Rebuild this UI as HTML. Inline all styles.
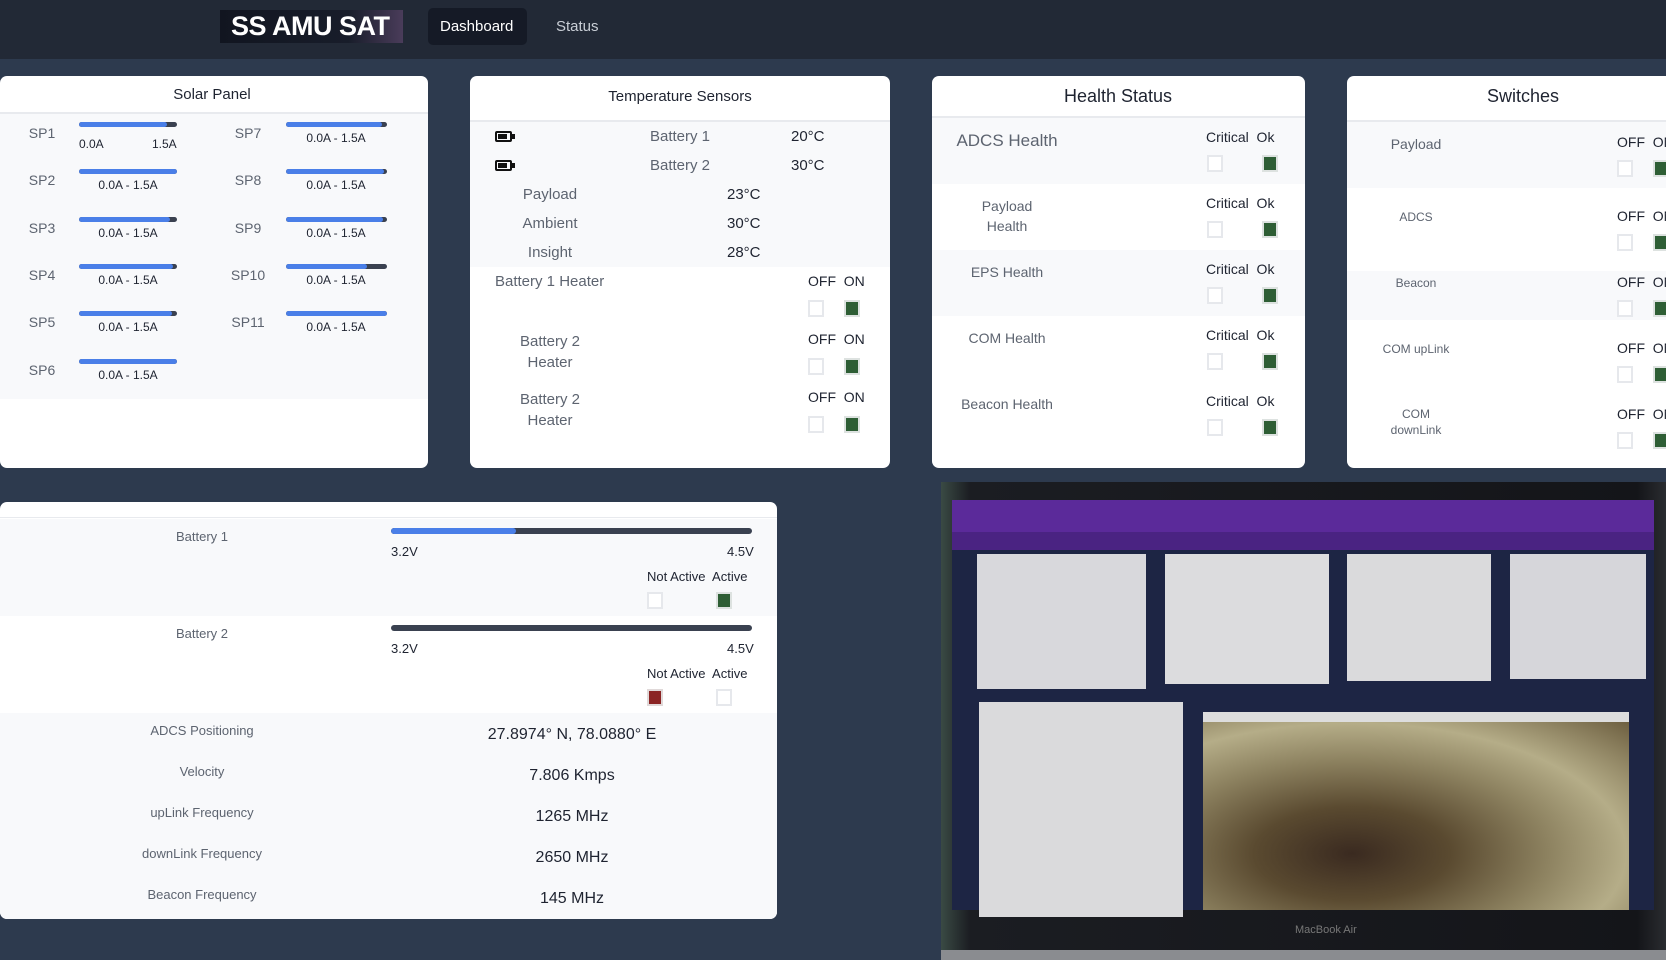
<!DOCTYPE html>
<html><head><meta charset="utf-8"><style>
*{margin:0;padding:0;box-sizing:border-box}
body{width:1666px;height:960px;overflow:hidden;background:#2d3a4e;font-family:"Liberation Sans",sans-serif;position:relative}
.a{position:absolute}
.card{position:absolute;background:#fff;border-radius:7px;overflow:hidden}
.g{position:absolute;background:#f8f9fb}
.t{position:absolute;white-space:nowrap}
.gr{color:#5d6470}
.dk{color:#1e2330}
.cb{position:absolute;width:16px;height:17px;border:2px solid #e6e8ec;background:#fff}
.on{background:#2e5e35;border-color:#dde2e0}
.red{background:#8b2424;border-color:#e0d9d9}
.bar{position:absolute;height:6px;border-radius:3px;background:#3a4150;overflow:hidden}
.bar i{position:absolute;left:0;top:0;bottom:0;background:#4a7fe8;border-radius:3px}
.c{text-align:center;transform:translateX(-50%)}
.line{position:absolute;left:0;right:0;height:2px;background:#e8eaee}
</style></head><body>
<div class="a" style="left:0;top:0;width:1666px;height:59px;background:#222936"></div>
<div class="a" style="left:220px;top:10px;width:183px;height:33px;background:linear-gradient(90deg,#111520,#181d2a 70%,#4a3c5a)"></div>
<div class="t" style="left:231px;top:11px;font-size:27px;font-weight:bold;color:#fff;letter-spacing:-0.5px">SS AMU SAT</div>
<div class="a" style="left:428px;top:8px;width:99px;height:37px;background:#151a26;border-radius:5px"></div>
<div class="t" style="left:440px;top:18px;font-size:15px;color:#fff">Dashboard</div>
<div class="t" style="left:556px;top:18px;font-size:15px;color:#c9ced6">Status</div>

<div class="card" style="left:0;top:76px;width:428px;height:392px">
<div class="t dk c" style="left:212px;top:10px;font-size:15px">Solar Panel</div>
<div class="line" style="top:36px"></div>
<div class="g" style="left:0;top:38px;width:428px;height:285px"></div>
</div>

<div class="card" style="left:470px;top:76px;width:420px;height:392px">
<div class="t dk c" style="left:210px;top:12px;font-size:15px">Temperature Sensors</div>
<div class="line" style="top:44px"></div>
<div class="g" style="left:0;top:46px;width:420px;height:145px"></div>
</div>
<div class="a" style="left:495px;top:131px;width:17px;height:11px;border:2px solid #111;border-radius:2px"><div style="margin:1px;width:9px;height:5px;background:#111"></div></div><div class="a" style="left:512px;top:134px;width:3px;height:5px;background:#111"></div>
<div class="a" style="left:495px;top:160px;width:17px;height:11px;border:2px solid #111;border-radius:2px"><div style="margin:1px;width:9px;height:5px;background:#111"></div></div><div class="a" style="left:512px;top:163px;width:3px;height:5px;background:#111"></div>
<div class="t gr c" style="left:680px;top:128px;font-size:15px">Battery 1</div><div class="t dk" style="left:791px;top:128px;font-size:15px">20°C</div>
<div class="t gr c" style="left:680px;top:157px;font-size:15px">Battery 2</div><div class="t dk" style="left:791px;top:157px;font-size:15px">30°C</div>
<div class="t gr c" style="left:550px;top:186px;font-size:15px">Payload</div><div class="t dk" style="left:727px;top:186px;font-size:15px">23°C</div>
<div class="t gr c" style="left:550px;top:215px;font-size:15px">Ambient</div><div class="t dk" style="left:727px;top:215px;font-size:15px">30°C</div>
<div class="t gr c" style="left:550px;top:244px;font-size:15px">Insight</div><div class="t dk" style="left:727px;top:244px;font-size:15px">28°C</div>
<div class="t gr" style="left:495px;top:273px;font-size:15px">Battery 1 Heater</div>
<div class="t gr c" style="left:550px;top:331px;font-size:15px;line-height:21px">Battery 2<br>Heater</div>
<div class="t gr c" style="left:550px;top:389px;font-size:15px;line-height:21px">Battery 2<br>Heater</div>

<div class="card" style="left:932px;top:76px;width:373px;height:392px">
<div class="t dk c" style="left:186px;top:10px;font-size:18px">Health Status</div>
<div class="line" style="top:40px"></div>
<div class="g" style="left:0;top:42px;width:373px;height:66px"></div>
<div class="g" style="left:0;top:174px;width:373px;height:66px"></div>
</div>

<div class="card" style="left:1347px;top:76px;width:340px;height:392px">
<div class="t dk c" style="left:176px;top:10px;font-size:18px">Switches</div>
<div class="line" style="top:44px"></div>
<div class="g" style="left:0;top:46px;width:340px;height:66px"></div>
<div class="g" style="left:0;top:195px;width:340px;height:49px"></div>
</div>

<div class="card" style="left:0;top:502px;width:777px;height:417px">
<div class="line" style="top:15px;height:1px"></div>
<div class="g" style="left:0;top:17px;width:777px;height:97px"></div>
<div class="g" style="left:0;top:211px;width:777px;height:206px"></div>
</div>
<div class="t gr c" style="left:202px;top:529px;font-size:13px">Battery 1</div>
<div class="bar" style="left:391px;top:528px;width:361px"><i style="width:125px"></i></div>
<div class="t dk" style="left:391px;top:544px;font-size:13px">3.2V</div><div class="t dk" style="left:727px;top:544px;font-size:13px">4.5V</div>
<div class="t dk" style="left:647px;top:569px;font-size:13px">Not Active&nbsp; Active</div>
<div class="cb" style="left:647px;top:592px"></div><div class="cb on" style="left:716px;top:592px"></div>
<div class="t gr c" style="left:202px;top:626px;font-size:13px">Battery 2</div>
<div class="bar" style="left:391px;top:625px;width:361px"></div>
<div class="t dk" style="left:391px;top:641px;font-size:13px">3.2V</div><div class="t dk" style="left:727px;top:641px;font-size:13px">4.5V</div>
<div class="t dk" style="left:647px;top:666px;font-size:13px">Not Active&nbsp; Active</div>
<div class="cb red" style="left:647px;top:689px"></div><div class="cb" style="left:716px;top:689px"></div>
<div class="t gr c" style="left:202px;top:723px;font-size:13px">ADCS Positioning</div><div class="t dk c" style="left:572px;top:726px;font-size:16px">27.8974° N, 78.0880° E</div>
<div class="t gr c" style="left:202px;top:764px;font-size:13px">Velocity</div><div class="t dk c" style="left:572px;top:767px;font-size:16px">7.806 Kmps</div>
<div class="t gr c" style="left:202px;top:805px;font-size:13px">upLink Frequency</div><div class="t dk c" style="left:572px;top:808px;font-size:16px">1265 MHz</div>
<div class="t gr c" style="left:202px;top:846px;font-size:13px">downLink Frequency</div><div class="t dk c" style="left:572px;top:849px;font-size:16px">2650 MHz</div>
<div class="t gr c" style="left:202px;top:887px;font-size:13px">Beacon Frequency</div><div class="t dk c" style="left:572px;top:890px;font-size:16px">145 MHz</div>

<div class="a" style="left:941px;top:482px;width:725px;height:478px;background:#1a1c22;overflow:hidden">
<div class="a" style="left:0;top:0;width:725px;height:478px;background:linear-gradient(90deg,#3a4a44 0,#1b1d22 4%,#141519 96%,#2a2c30 100%)"></div>
<div class="a" style="left:11px;top:18px;width:702px;height:50px;background:#5b2a9a"></div>
<div class="a" style="left:11px;top:50px;width:702px;height:18px;background:#4a2382"></div>
<div class="a" style="left:11px;top:68px;width:702px;height:360px;background:#1d2544"></div>
<div class="a" style="left:36px;top:72px;width:169px;height:135px;background:#d8d8dc"></div>
<div class="a" style="left:224px;top:72px;width:164px;height:130px;background:#dcdcde"></div>
<div class="a" style="left:406px;top:72px;width:144px;height:127px;background:#dadadc"></div>
<div class="a" style="left:569px;top:72px;width:136px;height:125px;background:#d6d6da"></div>
<div class="a" style="left:38px;top:220px;width:204px;height:215px;background:#dadadc"></div>
<div class="a" style="left:262px;top:230px;width:426px;height:10px;background:#ddd"></div>
<div class="a" style="left:262px;top:240px;width:426px;height:188px;background:radial-gradient(ellipse at 35% 70%,#3a2a20 0,#5a4a30 25%,#8d8260 50%,#b5ad88 70%,#6d5f40 100%)"></div>
<div class="t" style="left:354px;top:442px;font-size:11px;color:#777">MacBook Air</div>
<div class="a" style="left:0;top:468px;width:725px;height:10px;background:#8a8c90"></div>
</div>

<script>
function add(h){document.body.insertAdjacentHTML('beforeend',h)}
var L=[["SP1",133,1],["SP2",180,0],["SP3",228,0],["SP4",275,0],["SP5",322,0],["SP6",370,0]];
var fills1=[90,100,93,96,95,100],fills2=[95,97,96,80,100];
var R=["SP7","SP8","SP9","SP10","SP11"];
L.forEach(function(r,i){
 add('<div class="t gr c" style="left:42px;top:'+(r[1]-8)+'px;font-size:14px">'+r[0]+'</div>');
 add('<div class="bar" style="left:79px;top:'+(r[1]-11)+'px;width:98px;height:5px"><i style="width:'+fills1[i]+'%"></i></div>');
 if(r[2])add('<div class="t dk" style="left:79px;top:'+(r[1]+4)+'px;font-size:12px">0.0A</div><div class="t dk" style="left:152px;top:'+(r[1]+4)+'px;font-size:12px">1.5A</div>');
 else add('<div class="t dk c" style="left:128px;top:'+(r[1]-2)+'px;font-size:12px">0.0A - 1.5A</div>');
 if(i<5){
 add('<div class="t gr c" style="left:248px;top:'+(r[1]-8)+'px;font-size:14px">'+R[i]+'</div>');
 add('<div class="bar" style="left:286px;top:'+(r[1]-11)+'px;width:101px;height:5px"><i style="width:'+fills2[i]+'%"></i></div>');
 add('<div class="t dk c" style="left:336px;top:'+(r[1]-2)+'px;font-size:12px">0.0A - 1.5A</div>');}
});
[273,331,389].forEach(function(y){
 add('<div class="t dk" style="left:808px;top:'+y+'px;font-size:14px">OFF&nbsp; ON</div>');
 add('<div class="cb" style="left:808px;top:'+(y+27)+'px"></div><div class="cb on" style="left:844px;top:'+(y+27)+'px"></div>');
});
[["ADCS Health",131],["Payload<br>Health",196],["EPS Health",262],["COM Health",328],["Beacon Health",394]].forEach(function(r,i){
 var y=[137,203,269,335,401][i];
 add('<div class="t gr c" style="left:1007px;top:'+r[1]+'px;font-size:'+(i==0?17:14)+'px;line-height:20px">'+r[0]+'</div>');
 add('<div class="t dk" style="left:1206px;top:'+(y-8)+'px;font-size:14px">Critical&nbsp; Ok</div>');
 add('<div class="cb" style="left:1207px;top:'+(y+18)+'px"></div><div class="cb on" style="left:1262px;top:'+(y+18)+'px"></div>');
});
[["Payload",134,14,134],["ADCS",207,12,208],["Beacon",273,12,274],["COM upLink",339,12,340],["COM<br>downLink",404,12,406]].forEach(function(r){
 add('<div class="t gr c" style="left:1416px;top:'+(r[1]+2)+'px;font-size:'+r[2]+'px;line-height:16px">'+r[0]+'</div>');
 add('<div class="t dk" style="left:1617px;top:'+r[3]+'px;font-size:14px">OFF&nbsp; ON</div>');
 add('<div class="cb" style="left:1617px;top:'+(r[3]+26)+'px"></div><div class="cb on" style="left:1653px;top:'+(r[3]+26)+'px"></div>');
});
</script>
</body></html>
